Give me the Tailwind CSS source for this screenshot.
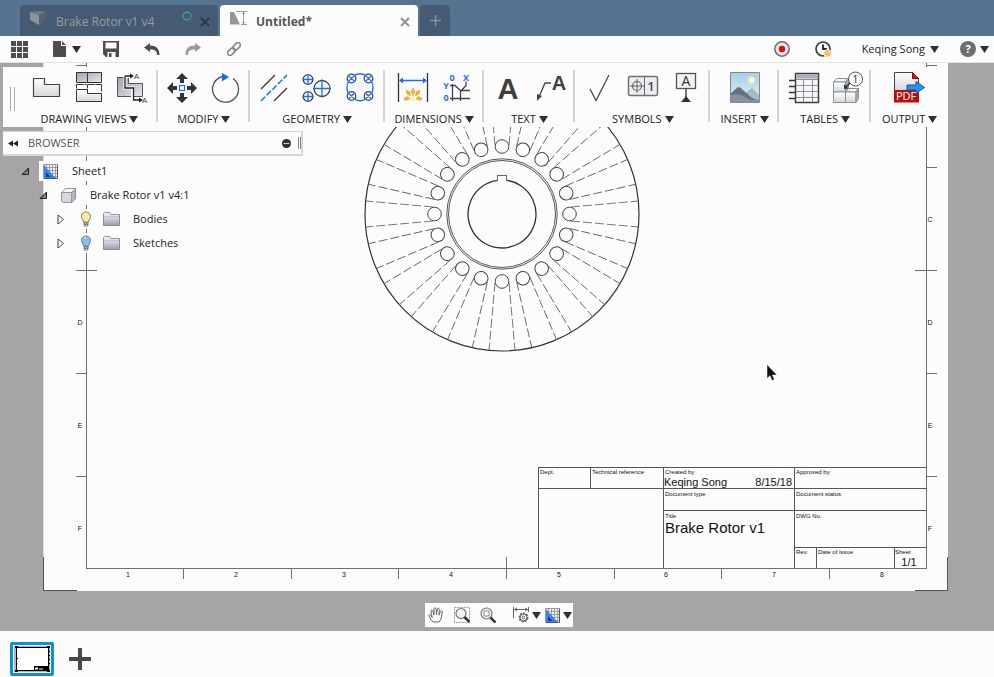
<!DOCTYPE html>
<html lang="en">
<head>
  <meta charset="UTF-8">
  <meta name="viewport" content="width=device-width, initial-scale=1.0">
  <title>Untitled* - Drawing</title>
  <script src="https://cdn.jsdelivr.net/npm/@tailwindcss/browser@4"></script>
</head>
<body class="h-screen flex flex-col overflow-hidden bg-[#fcfcfc] font-['Open_Sans',sans-serif] text-[11px] leading-4 text-[#222]">

  <!-- shared shapes -->
  <svg class="absolute w-0 h-0" aria-hidden="true">
    <defs>
      <linearGradient id="metal" x1="0" y1="0" x2="0" y2="1"><stop offset="0" stop-color="#fff"/><stop offset="1" stop-color="#d4d6da"/></linearGradient>
      <linearGradient id="steel" x1="0" y1="0" x2="1" y2="1"><stop offset="0" stop-color="#9da1ab"/><stop offset="1" stop-color="#e6e8ec"/></linearGradient>
      <linearGradient id="folder" x1="0" y1="0" x2="0" y2="1"><stop offset="0" stop-color="#f6f7f8"/><stop offset="1" stop-color="#9aa2b0"/></linearGradient>
      <linearGradient id="sky" x1="0" y1="0" x2="0" y2="1"><stop offset="0" stop-color="#a5cfe6"/><stop offset="1" stop-color="#e0f2f8"/></linearGradient>
    </defs>
    <symbol id="caret" viewBox="0 0 9 7"><path d="M0 0h9L4.500 7z" fill="#2f2f2f"/></symbol>
    <symbol id="bulb" viewBox="0 0 12 16">
      <path d="M6 1a4.500 4.500 0 0 1 4.500 4.500C10.500 8 8.500 9 8.300 11.200H3.700C3.500 9 1.500 8 1.500 5.500A4.500 4.500 0 0 1 6 1z" fill="currentColor" stroke="#77776f"/>
      <path d="M4 3.500q1-1.300 2-1.300" stroke="#fff" fill="none"/>
      <path d="M4 11.500h4v3L6 15.500l-2-1z" fill="#ddd" stroke="#666" stroke-width=".8"/><path d="M4 13.200h4" stroke="#555"/>
    </symbol>
    <symbol id="folder-icon" viewBox="0 0 17 14">
      <path d="M.5 13.500v-12l1-1h5l1.500 2h8.500v11z" fill="url(#folder)" stroke="#8a8e96"/><path d="M1 4.500h15" stroke="#c4c7cc"/>
    </symbol>
    <symbol id="sheet-icon" viewBox="0 0 15 15">
      <path d="M.5.500h14v14H.5z" fill="#f3f3f3" stroke="#999"/>
      <path d="M3.500 1v13M6.500 1v13M9.500 1v13M12.500 1v13M1 3.500h13M1 6.500h13M1 9.500h13M1 12.500h13" stroke="#8b8b8b" stroke-width=".8"/>
      <path d="M1 1l12 13.500H1z" fill="#3384f5"/><path d="M3 8l4.500 5H3z" fill="#163d80"/>
      <path d="M14.500 1v13.500H1" fill="none" stroke="#555"/>
    </symbol>
    <symbol id="expanded" viewBox="0 0 9 9"><path d="M7.500 1v6.500H1z" fill="#666" stroke="#222"/><path d="M6.500 4v2.500H4z" fill="#aaa"/></symbol>
    <symbol id="collapsed" viewBox="0 0 8 11"><path d="M1 1l5.500 4.500L1 10z" fill="#fff" stroke="#444"/></symbol>
  </svg>

  <!-- document tabs -->
  <header class="h-9 shrink-0 bg-[#56738f] pl-5 flex items-end gap-[2px]">
    <div class="w-[198px] h-[31px] rounded-t bg-[#455b73] text-[#9b9b9b] flex items-center pl-[9px] pr-1 pt-0.5">
      <svg class="w-[18px] h-4 mr-[9px] mb-2" viewBox="0 0 18 16"><path d="M1 2l10-1 6 1-7 3z" fill="#707a83"/><path d="M1 2l9 3v10l-9-5z" fill="#8b9399"/><path d="M10 5l7-3v8l-7 5z" fill="#566470"/></svg>
      <button class="text-[12px] whitespace-nowrap">Brake Rotor v1 v4</button>
      <svg class="w-[10px] h-[10px] ml-auto mb-3" viewBox="0 0 10 10"><circle cx="5" cy="5" r="4" fill="none" stroke="#3fa08d" stroke-width="1.300"/></svg>
      <button aria-label="Close Brake Rotor" class="ml-1 p-1"><svg class="w-[10px] h-[10px]" viewBox="0 0 10 10"><path d="M.8.800l8.400 8.400M9.200.800L.8 9.200" stroke="#2e3741" stroke-width="1.800"/></svg></button>
    </div>
    <div class="w-[198px] h-[31px] rounded-t bg-[#fcfcfc] text-[#555] flex items-center pl-[9px] pr-1 pt-0.5">
      <svg class="w-[18px] h-4 mr-[9px] mb-2" viewBox="0 0 18 16"><path d="M1 14.500V2h4l6 12.500z" fill="#959595"/><path d="M7 1.500h11M14.500 1v14M12 14.500h6" fill="none" stroke="#858585" stroke-width=".8"/><path d="M14.500 2l-1.500 2h3zM14.500 14l-1.500-2h3z" fill="#858585"/></svg>
      <button class="text-[12px] font-bold">Untitled*</button>
      <button aria-label="Close Untitled" class="ml-auto p-1"><svg class="w-[10px] h-[10px]" viewBox="0 0 10 10"><path d="M1 1l8 8M9 1L1 9" stroke="#929292" stroke-width="2"/></svg></button>
    </div>
    <button aria-label="New tab" class="w-[30px] h-[31px] rounded-t bg-[#455b73] flex items-center justify-center"><svg class="w-[11px] h-[11px]" viewBox="0 0 11 11"><path d="M5.500 0v11M0 5.500h11" stroke="#8b9093" stroke-width="1.500"/></svg></button>
  </header>

  <!-- quick access bar -->
  <nav class="h-[27px] shrink-0 border-b border-[#e2e2e2] bg-[#fcfcfc] flex items-center pl-[11px] pr-[5px]">
    <button aria-label="Data panel" class="mr-6"><svg class="w-[18px] h-[17px]" viewBox="0 0 18 17" fill="#4d4d4d"><path d="M0 0h5v5H0zM6 0h5v5H6zM12 0h5v5h-5zM0 6h5v5H0zM6 6h5v5H6zM12 6h5v5h-5zM0 12h5v5H0zM6 12h5v5H6zM12 12h5v5h-5z"/></svg></button>
    <button aria-label="File" class="flex items-center gap-[6px]"><svg class="w-[13px] h-4" viewBox="0 0 13 16" fill="#4d4d4d"><path d="M0 0h8v5h5v11H0zM9 0l4 4H9z"/></svg><svg class="w-[9px] h-[7px]"><use href="#caret"/></svg></button>
    <button aria-label="Save" class="ml-[22px]"><svg class="w-4 h-4" viewBox="0 0 16 16"><path d="M0 0h16v16H3l-3-3z" fill="#4d4d4d"/><path d="M2.500 1.500h11v6h-11zM4.500 11h8v5h-8z" fill="#fcfcfc"/><path d="M6 12h2.500v4H6z" fill="#4d4d4d"/></svg></button>
    <button aria-label="Undo" class="ml-[25px]"><svg class="w-4 h-3" viewBox="0 0 16 12"><path d="M0 4.500L6 0v2.500c6 0 9.500 3 9.500 9.500h-2.500c0-4-2-5.500-7-5.500V9z" fill="#4d4d4d"/></svg></button>
    <button aria-label="Redo" class="ml-[25px]"><svg class="w-4 h-3" viewBox="0 0 16 12"><path d="M16 4.500L10 0v2.500C4 2.500.5 5.500.500 12H3c0-4 2-5.500 7-5.500V9z" fill="#9a9a9a"/></svg></button>
    <button aria-label="Link" class="ml-[26px]"><svg class="w-[14px] h-[14px]" viewBox="0 0 14 14" fill="none" stroke="#8a8a8a" stroke-width="1.600"><g transform="rotate(-45 7 7)"><rect x="-1" y="4.500" width="8.500" height="5" rx="2.500"/><rect x="6.500" y="4.500" width="8.500" height="5" rx="2.500"/></g></svg></button>
    <button aria-label="Record" class="ml-auto"><svg class="w-4 h-4" viewBox="0 0 16 16"><circle cx="8" cy="8" r="7.200" fill="#e6e6e6" stroke="#6a6a6a" stroke-width="1.500"/><circle cx="8" cy="8" r="3.200" fill="#e20f06"/></svg></button>
    <button aria-label="Job status" class="ml-[25px]"><svg class="w-4 h-4" viewBox="0 0 16 16"><circle cx="8" cy="8" r="7" fill="none" stroke="#3e3e3e" stroke-width="1.700"/><path d="M8 3.500V8h4" fill="none" stroke="#222" stroke-width="1.800"/><circle cx="12.500" cy="12.300" r="4" fill="#fcfcfc"/><circle cx="12.500" cy="12.300" r="3.200" fill="#ffbd5c"/></svg></button>
    <button class="ml-[31px] flex items-center gap-[5px] whitespace-nowrap">Keqing Song <svg class="w-[9px] h-[7px]"><use href="#caret"/></svg></button>
    <button aria-label="Help" class="ml-[21px] flex items-center gap-1"><svg class="w-4 h-4" viewBox="0 0 16 16"><circle cx="8" cy="8" r="8" fill="#6e6e6e"/><text x="8" y="12" text-anchor="middle" font-size="11" font-weight="bold" fill="#fff">?</text></svg><svg class="w-[9px] h-[7px]"><use href="#caret"/></svg></button>
  </nav>

  <main class="relative flex-1 min-h-0 overflow-hidden bg-[#a5a5a5]">

    <!-- drawing sheet -->
    <div class="ml-[43px] mr-[46px]">
      <svg class="block w-full h-auto bg-[#fcfcfc]" viewBox="43 63 905 528" role="img" aria-label="Brake rotor drawing sheet" font-family="Liberation Sans, sans-serif" fill="#111">
        <g fill="none" stroke="#6f6f6f" shape-rendering="crispEdges">
          <path d="M43.500 63v494" stroke="#dcdcdc"/>
          <path d="M43.500 557v33.500H77M947.500 557v33.500H915" stroke="#555"/>
          <path d="M86.500 63v505.500h840V63"/>
          <path d="M76 65.500h10M76 270.500h21M76 373.500h10M76 476.500h10M927 65.500h10M927 167.500h10M915 270.500h22M927 373.500h10M927 476.500h10"/>
          <path d="M183.500 568v11M291.500 568v11M398.500 568v11M506.500 557v22M614.500 568v11M721.500 568v11M829.500 568v11"/>
          <path d="M538.500 568v-100.500h388M538.500 488.500h388M663.500 510.500h263M794.500 547.500h132M590.500 467v21M663.500 467v101M794.500 467v101M816.500 547v21M894.500 547v21" stroke="#555"/>
        </g>
        <g font-size="7" text-anchor="middle">
          <text x="80" y="325">D</text><text x="80" y="428">E</text><text x="80" y="531">F</text>
          <text x="930" y="222">C</text><text x="930" y="325">D</text><text x="930" y="428">E</text><text x="930" y="531">F</text>
          <text x="128" y="577">1</text><text x="236" y="577">2</text><text x="344" y="577">3</text><text x="451" y="577">4</text>
          <text x="559" y="577">5</text><text x="666" y="577">6</text><text x="774" y="577">7</text><text x="882" y="577">8</text>
        </g>
        <g font-size="6">
          <text x="540" y="474">Dept.</text><text x="592" y="474">Technical reference</text><text x="665" y="474">Created by</text><text x="796" y="474">Approved by</text>
          <text x="665" y="496">Document type</text><text x="796" y="496">Document status</text>
          <text x="665" y="518">Title</text><text x="796" y="518">DWG No.</text>
          <text x="796" y="554">Rev.</text><text x="818" y="554">Date of issue</text><text x="895" y="554">Sheet</text>
        </g>
        <g font-size="11">
          <text x="664" y="486">Keqing Song</text><text x="792" y="486" text-anchor="end">8/15/18</text><text x="909" y="566" text-anchor="middle">1/1</text>
        </g>
        <text x="665" y="533" font-size="15">Brake Rotor v1</text>
        <g transform="translate(502 214)" fill="none" stroke="#444">
          <circle r="137" stroke="#333" stroke-width="1.200"/>
          <circle r="55.200" stroke-width=".9"/><circle r="53.500" stroke-width=".9"/>
          <path d="M4.500-33.700A34 34 0 1 1-4.500-33.700" stroke="#333" stroke-width="1.300"/>
          <path d="M-4.500-33.500v-5h9v5" shape-rendering="crispEdges" stroke="#666"/>
          <g id="vanes"></g>
        </g>
      </svg>
    </div>

    <!-- ribbon -->
    <div class="absolute left-[3px] right-[46px] top-1 h-[60px] bg-[#fcfcfc] flex items-stretch">
      <div class="w-[18px] shrink-0 flex items-center justify-center gap-[3px] pt-1"><i class="w-px h-6 bg-[#aaa]"></i><i class="w-px h-6 bg-[#aaa]"></i></div>

      <section class="w-[137px] mt-[3px] mb-[5px] pl-0.5 border-r-2 border-[#d4d4d4] flex flex-col items-center justify-between">
        <div class="flex">
          <button aria-label="Base view" class="w-[43px] flex justify-center"><svg class="w-9 h-9" viewBox="0 0 36 36"><path d="M5.500 8.500h11v6h15v12h-26z" fill="url(#metal)" stroke="#444" stroke-width="1.200"/></svg></button>
          <button aria-label="Projected view" class="w-[43px] flex justify-center"><svg class="w-9 h-9" viewBox="0 0 36 36" stroke="#333"><path d="M5.500 2.500h25v10h-25z" fill="url(#steel)"/><path d="M16.500 2.500v10"/><path d="M5.500 14.500v4M5.500 14.500h10M16.500 14.500h14M30.500 14.500v7M16.500 14.500v4" fill="none" stroke-dasharray="7 1"/><path d="M5.500 19.500h11v4h14v8h-25z" fill="url(#metal)"/></svg></button>
          <button aria-label="Section view" class="w-[43px] flex justify-center"><svg class="w-9 h-9" viewBox="0 0 36 36"><path d="M3.500 7.500h11v6h14v13h-25z" fill="url(#steel)" stroke="#555"/><path d="M11 6.500v11.500h7.500v12h6M11 6.500h5" fill="none" stroke="#fff" stroke-width="3"/><path d="M11 6h6M11 6v12h8.500v12h6" fill="none" stroke="#222" stroke-width="1.300"/><path d="M16 3.500l4 2.500-4 2.500zM25 27.500l4 2.500-4 2.500z" fill="#222"/><g font-size="8" fill="#333"><text x="20" y="9">A</text><text x="28" y="33">A</text></g></svg></button>
        </div>
        <button class="-mb-[5px] flex items-center gap-[3px] whitespace-nowrap">DRAWING VIEWS <svg class="w-[9px] h-[7px]"><use href="#caret"/></svg></button>
      </section>

      <section class="w-[92px] mt-[3px] mb-[5px] pl-0.5 border-r-2 border-[#d4d4d4] flex flex-col items-center justify-between">
        <div class="flex">
          <button aria-label="Move" class="w-[43px] flex justify-center"><svg class="w-9 h-9" viewBox="0 0 36 36"><path d="M18 3l6 6h-4v4h-4V9h-4zM18 33l6-6h-4v-4h-4v4h-4zM3 18l6-6v4h4v4H9v4zM33 18l-6-6v4h-4v4h4v4z" fill="#333"/><path d="M15.500 15.500h5v5h-5z" fill="#fff" stroke="#0a6cff" stroke-width="1.200"/></svg></button>
          <button aria-label="Rotate" class="w-[43px] flex justify-center"><svg class="w-9 h-9" viewBox="0 0 36 36"><path d="M26 8.500A13 13 0 1 1 15.500 6.500" fill="none" stroke="#555" stroke-width="1.300"/><path d="M15 3l7 4-7 4.500z" fill="#0a6cff"/></svg></button>
        </div>
        <button class="-mb-[5px] flex items-center gap-[3px]">MODIFY <svg class="w-[9px] h-[7px]"><use href="#caret"/></svg></button>
      </section>

      <section class="w-[135px] mt-[3px] mb-[5px] pl-0.5 border-r-2 border-[#d4d4d4] flex flex-col items-center justify-between">
        <div class="flex">
          <button aria-label="Centerline" class="w-[43px] flex justify-center"><svg class="w-9 h-9" viewBox="0 0 36 36" stroke="#444" stroke-width="1.500"><path d="M5 19L19 5M18 31l13-13"/><path d="M5 31L31 5" stroke="#1a6eff" stroke-dasharray="6 2"/></svg></button>
          <button aria-label="Center mark" class="w-[43px] flex justify-center"><svg class="w-9 h-9" viewBox="0 0 36 36" fill="none"><g stroke="#3b4048" stroke-width="1.300"><circle cx="9" cy="9.500" r="4.800"/><circle cx="9" cy="26.500" r="4.800"/><circle cx="23" cy="18.500" r="8"/></g><path d="M9 4v11M3.500 9.500h11M9 21v11M3.500 26.500h11M23 9.500v18M14 18.500h18" stroke="#1a6eff" stroke-width="1.300"/></svg></button>
          <button aria-label="Center mark pattern" class="w-[43px] flex justify-center"><svg class="w-9 h-9" viewBox="0 0 36 36" fill="none"><g stroke="#3b4048" stroke-width="1.200"><circle cx="9.500" cy="8.500" r="4.300"/><circle cx="26.500" cy="8.500" r="4.300"/><circle cx="9.500" cy="26" r="4.300"/><circle cx="26.500" cy="26" r="4.300"/></g><path d="M12 5.500q6-3.500 12 0M12 29q6 3.500 12 0M6.500 11.500q-3 6 0 12M29.500 11.500q3 6 0 12M6.500 5.500l6 6M12.500 5.500l-6 6M23.500 5.500l6 6M29.500 5.500l-6 6M6.500 23l6 6M12.500 23l-6 6M23.500 23l6 6M29.500 23l-6 6" stroke="#1a6eff" stroke-width="1.300"/></svg></button>
        </div>
        <button class="-mb-[5px] flex items-center gap-[3px]">GEOMETRY <svg class="w-[9px] h-[7px]"><use href="#caret"/></svg></button>
      </section>

      <section class="w-[99px] mt-[3px] mb-[5px] pl-0.5 border-r-2 border-[#d4d4d4] flex flex-col items-center justify-between">
        <div class="flex">
          <button aria-label="Dimension" class="w-[43px] flex justify-center"><svg class="w-9 h-9" viewBox="0 0 36 36"><path d="M3.500 3v29M32.500 3v29" stroke="#333" stroke-width="1.300"/><path d="M5 10.500h26" stroke="#1a6eff" stroke-width="1.500"/><path d="M4 10.500l4-3v6zM32 10.500l-4-3v6z" fill="#1a6eff"/><g fill="#f5b51d" stroke="#c98d1a" stroke-width=".4"><path d="M18 18l2 3.500-2 4-2-4z"/><path d="M11 20l4 2 .5 4-3.500-2z"/><path d="M25 20l-4 2-.5 4 3.500-2z"/><path d="M9 28l4-1.500 2 2.500-5 1.500z"/><path d="M27 28l-4-1.500-2 2.500 5 1.500z"/></g><circle cx="18" cy="28.500" r="2.500" fill="#fff0b5"/></svg></button>
          <button aria-label="Ordinate dimension" class="w-[43px] flex justify-center"><svg class="w-9 h-9" viewBox="0 0 36 36"><path d="M12 15.500h5l6 5.500 5-5.500v-4M14.500 14v17M22.500 21v10M22 20.500h10M12 28.500h20" fill="none" stroke="#444" stroke-width="1.300"/><g font-size="9" font-weight="bold" fill="#1a6eff" text-anchor="middle"><text x="14" y="11">0</text><text x="28" y="11">X</text><text x="8" y="19">Y</text><text x="8" y="31">0</text></g></svg></button>
        </div>
        <button class="-mb-[5px] flex items-center gap-[3px]">DIMENSIONS <svg class="w-[9px] h-[7px]"><use href="#caret"/></svg></button>
      </section>

      <section class="w-[92px] mt-[3px] mb-[5px] pl-0.5 border-r-2 border-[#d4d4d4] flex flex-col items-center justify-between">
        <div class="flex">
          <button aria-label="Text" class="w-[43px] flex justify-center"><svg class="w-9 h-9" viewBox="0 0 36 36"><text x="18" y="29" text-anchor="middle" font-size="29" font-weight="bold" font-family="Liberation Sans" fill="#3f3f3f">A</text></svg></button>
          <button aria-label="Leader" class="w-[43px] flex justify-center"><svg class="w-9 h-9" viewBox="0 0 36 36"><path d="M6 27l6-14h6" fill="none" stroke="#444" stroke-width="1.300"/><path d="M4 31V24l5 2z" fill="#444"/><text x="26" y="20" text-anchor="middle" font-size="20" font-weight="bold" font-family="Liberation Sans" fill="#3f4148">A</text></svg></button>
        </div>
        <button class="-mb-[5px] flex items-center gap-[3px]">TEXT <svg class="w-[9px] h-[7px]"><use href="#caret"/></svg></button>
      </section>

      <section class="w-[135px] mt-[3px] mb-[5px] pl-0.5 border-r-2 border-[#d4d4d4] flex flex-col items-center justify-between">
        <div class="flex">
          <button aria-label="Surface texture" class="w-[43px] flex justify-center"><svg class="w-9 h-9" viewBox="0 0 36 36"><path d="M8 19l6 11.500L27 5" fill="none" stroke="#4a4a4a" stroke-width="1.300"/></svg></button>
          <button aria-label="Feature control frame" class="w-[43px] flex justify-center"><svg class="w-9 h-9" viewBox="0 0 36 36"><rect x="3.500" y="6.500" width="29" height="19" rx="2" fill="#eceef0" stroke="#707070" stroke-width="1.500"/><path d="M19.500 7v18M12 9v14M5 16h14" stroke="#606468"/><circle cx="12" cy="16" r="4.500" fill="none" stroke="#606468" stroke-width="1.200"/><text x="26" y="21" text-anchor="middle" font-size="13" font-weight="600" fill="#4c4c4c">1</text></svg></button>
          <button aria-label="Datum identifier" class="w-[43px] flex justify-center"><svg class="w-9 h-9" viewBox="0 0 36 36"><rect x="8.500" y="3.500" width="19" height="15" fill="#f1f2f4" stroke="#555" stroke-width="1.300"/><path d="M18 19v8" stroke="#444" stroke-width="1.500"/><path d="M18 26l5 6H13z" fill="#333"/><text x="18" y="16" text-anchor="middle" font-size="14" fill="#333">A</text></svg></button>
        </div>
        <button class="-mb-[5px] flex items-center gap-[3px]">SYMBOLS <svg class="w-[9px] h-[7px]"><use href="#caret"/></svg></button>
      </section>

      <section class="w-[69px] mt-[3px] mb-[5px] pl-0.5 border-r-2 border-[#d4d4d4] flex flex-col items-center justify-between">
        <button aria-label="Insert image" class="w-[43px] flex justify-center"><svg class="w-9 h-9" viewBox="0 0 36 36"><path d="M3.500 2.500h29v30h-29z" fill="url(#sky)" stroke="#83888e"/><circle cx="24.500" cy="10" r="3.300" fill="#fffbdc" stroke="#f3e7a0"/><path d="M17 24l8-6 7 7v7H15z" fill="#a9b6c4"/><path d="M4 23l7-6q3 0 5 3l9 8 7 3v1H4z" fill="#66727f"/><path d="M4 25q9-2 14 2t14 3v2H4z" fill="#8593a2"/></svg></button>
        <button class="-mb-[5px] flex items-center gap-[3px]">INSERT <svg class="w-[9px] h-[7px]"><use href="#caret"/></svg></button>
      </section>

      <section class="w-[92px] mt-[3px] mb-[5px] pl-0.5 border-r-2 border-[#d4d4d4] flex flex-col items-center justify-between">
        <div class="flex">
          <button aria-label="Parts list" class="w-[43px] flex justify-center"><svg class="w-9 h-9" viewBox="0 0 36 36"><path d="M9.500 3.500h23v29h-23z" fill="#f5f6f8" stroke="#3c3f45" stroke-width="1.500"/><path d="M10 4h22v4.500H10z" fill="#a9adb7"/><path d="M3 10.500h6M3 16.500h6M3 22.500h6M3 28.500h6" stroke="#333" stroke-width="1.500"/><path d="M10 9.500h22M10 15.500h22M10 21.500h22M10 27.500h22M17.500 9v23M26.500 9v23" stroke="#8a8e96"/></svg></button>
          <button aria-label="Balloon" class="w-[43px] flex justify-center"><svg class="w-9 h-9" viewBox="0 0 36 36" stroke="#8c9096"><path d="M4.500 12l3-3.500h11l-2 3.500z" fill="#f2f3f4"/><path d="M4.500 12h12v10h-12z" fill="url(#metal)"/><path d="M16.500 12l3-3v10l-3 3z" fill="#a9adb3"/><path d="M16.500 22l3-3.500h10l-2.500 3.500z" fill="#f2f3f4"/><path d="M4.500 22h12v10.500h-12zM16.500 22H27v10.500H16.500z" fill="url(#metal)"/><path d="M27 22l2.500-3.500v10l-2.500 4z" fill="#a9adb3"/><path d="M21 13l-4 4" stroke="#333" stroke-width="1.500"/><path d="M15 19v-5l4.500 4.500z" fill="#333" stroke="none"/><circle cx="26.500" cy="9" r="7" fill="#fff" stroke="#555"/><text x="26.500" y="13" text-anchor="middle" font-size="11" fill="#333" stroke="none">1</text></svg></button>
        </div>
        <button class="-mb-[5px] flex items-center gap-[3px]">TABLES <svg class="w-[9px] h-[7px]"><use href="#caret"/></svg></button>
      </section>

      <section class="w-[77px] mt-[3px] mb-[5px] flex flex-col items-center justify-between">
        <button aria-label="Output PDF" class="w-[43px] flex justify-center"><svg class="w-9 h-9" viewBox="0 0 36 36"><path d="M2.500 2.500h18l6 6v12h-24z" fill="url(#metal)" stroke="#444"/><path d="M20.500 2.500v6h6z" fill="#d21515" stroke="#8d0d0d"/><path d="M2 20h25v12.500H2z" fill="#bd0d0a"/><path d="M15 15h9v-3.500l8.500 6-8.500 6V20h-9z" fill="#2491f5" stroke="#1057a8"/><text x="4" y="30" font-size="11" fill="#fff">PDF</text></svg></button>
        <button class="-mb-[5px] flex items-center gap-[3px]">OUTPUT <svg class="w-[9px] h-[7px]"><use href="#caret"/></svg></button>
      </section>
    </div>

    <!-- browser panel and tree -->
    <aside class="absolute left-[3px] top-[68px] w-[300px]">
      <div class="h-[25px] bg-[#fcfcfc] border-r-2 border-b-2 border-t border-[#d6d6d6] flex items-center pl-1">
        <button aria-label="Collapse browser" class="mr-[9px]"><svg class="w-3 h-[7px]" viewBox="0 0 12 7" fill="#222"><path d="M6 .5v6L1 3.500zM11 .5v6L6 3.500z"/></svg></button>
        <h2 class="text-[#555]">BROWSER</h2>
        <button aria-label="Panel options" class="ml-auto mr-[7px]"><svg class="w-[9px] h-[9px]" viewBox="0 0 9 9"><circle cx="4.500" cy="4.500" r="4.500" fill="#2b2b2b"/><path d="M1.500 4.500h6" stroke="#ccc" stroke-width="1.200"/></svg></button>
        <i class="w-px h-3 bg-[#888] mr-px"></i><i class="w-px h-3 bg-[#888]"></i>
      </div>
      <ul class="pt-[3px] flex flex-col">
        <li class="h-6 flex items-center pl-[18px]">
          <button aria-label="Collapse Sheet1"><svg class="w-[9px] h-[9px]"><use href="#expanded"/></svg></button>
          <span class="ml-[9px] w-[72px] h-5 bg-[#fcfcfc] flex items-center gap-[14px] pl-1"><svg class="w-[15px] h-[15px] shrink-0"><use href="#sheet-icon"/></svg>Sheet1</span>
        </li>
        <li class="h-6 flex items-center pl-9">
          <button aria-label="Collapse Brake Rotor"><svg class="w-[9px] h-[9px]"><use href="#expanded"/></svg></button>
          <span class="ml-[9px] h-5 bg-[#fcfcfc] flex items-center gap-[14px] pl-1 whitespace-nowrap"><svg class="w-[15px] h-[15px] shrink-0" viewBox="0 0 15 15" stroke="#93969c"><path d="M.5 4.500l4-4h10l-4 4z" fill="#f7f7f7"/><path d="M.5 4.500h10v10H2l-1.500-1.500z" fill="#d5d8dd"/><path d="M10.500 4.500l4-4V11l-4 3.500z" fill="#b3b6bc"/></svg>Brake Rotor v1 v4:1</span>
        </li>
        <li class="h-6 flex items-center pl-[54px]">
          <button aria-label="Expand Bodies"><svg class="w-2 h-[11px]"><use href="#collapsed"/></svg></button>
          <span class="ml-[11px] h-5 bg-[#fcfcfc] flex items-center pl-1"><svg class="w-3 h-4 text-[#fbeaa0]"><use href="#bulb"/></svg><svg class="w-[17px] h-[14px] ml-[11px] mr-[13px]"><use href="#folder-icon"/></svg>Bodies</span>
        </li>
        <li class="h-6 flex items-center pl-[54px]">
          <button aria-label="Expand Sketches"><svg class="w-2 h-[11px]"><use href="#collapsed"/></svg></button>
          <span class="ml-[11px] h-5 bg-[#fcfcfc] flex items-center pl-1"><svg class="w-3 h-4 text-[#8cbcf5]"><use href="#bulb"/></svg><svg class="w-[17px] h-[14px] ml-[11px] mr-[13px]"><use href="#folder-icon"/></svg>Sketches</span>
        </li>
      </ul>
    </aside>

    <!-- navigation bar -->
    <div class="absolute bottom-1 left-[425px] h-6 bg-[#fcfcfc] flex items-center pl-[3px] pr-px">
      <button aria-label="Pan" class="mr-[10px]"><svg class="w-4 h-4" viewBox="0 0 16 16"><path d="M5 15C3 13 2 10.500.700 8.500c0-1.300 1.500-1.300 2.500.5l1 1.500L3 4c0-1.300 1.500-1.300 2 0l1 4V1.800c0-1.300 2-1.300 2 0L8.500 7.500 9.300 2c.2-1.200 2-1.200 1.900.2L11 8.200l1.700-4c.6-1.200 2-.6 1.700.6L13 12l-2 3z" fill="#fff" stroke="#666"/></svg></button>
      <button aria-label="Zoom window" class="mr-[9px]"><svg class="w-[17px] h-4" viewBox="0 0 17 16"><path d="M.5.500h15v15H.5z" fill="none" stroke="#999" stroke-dasharray="2 1"/><circle cx="7" cy="6.500" r="5" fill="#f0f2f4" stroke="#777" stroke-width="1.200"/><path d="M10.500 10l5 5" stroke="#333" stroke-width="2.500"/></svg></button>
      <button aria-label="Fit" class="mr-[17px]"><svg class="w-4 h-4" viewBox="0 0 16 16"><circle cx="6.500" cy="6.500" r="5.500" fill="#f0f2f4" stroke="#777" stroke-width="1.200"/><path d="M4 4h5v5H4z" fill="#fff" stroke="#888"/><path d="M10.500 10.500l5 5" stroke="#333" stroke-width="2.500"/></svg></button>
      <button aria-label="Display settings" class="flex items-center gap-[2px] mr-1"><svg class="w-[17px] h-4" viewBox="0 0 17 16" fill="none" stroke="#666"><path d="M.5 0v11M15.500 0v5M1 2.500h14M4 1L1.500 2.500 4 4M12 1l2.500 1.500L12 4"/><circle cx="10.500" cy="10.500" r="4" stroke-width="2" stroke-dasharray="2 1"/><circle cx="10.500" cy="10.500" r="3.500"/><circle cx="10.500" cy="10.500" r="1.300"/></svg><svg class="w-[9px] h-[7px]"><use href="#caret"/></svg></button>
      <button aria-label="Sheet settings" class="flex items-center gap-[3px]"><svg class="w-[15px] h-[15px]"><use href="#sheet-icon"/></svg><svg class="w-[9px] h-[7px]"><use href="#caret"/></svg></button>
    </div>

    <!-- pointer -->
    <svg class="absolute left-[766px] top-[301px] w-3 h-[18px]" viewBox="0 0 12 18"><path d="M1 .5v14l3-2.800 2 4.800 2.500-1-2-4.500h4.500z" fill="#111" stroke="#fff" stroke-width=".5"/></svg>
  </main>

  <!-- sheet strip -->
  <footer class="h-[46px] shrink-0 bg-[#fcfcfc] flex items-center pl-[10px] pt-[10px] gap-[15px]">
    <button aria-label="Sheet 1" class="w-11 h-[34px] border-[3px] border-[#0696d7] rounded-[2px] bg-white flex items-center justify-center">
      <svg class="w-9 h-[26px]" viewBox="0 0 36 26"><path d="M0 0h36v26H0z" fill="#b5b5b5"/><path d="M2.500 1.500h32v23h-32z" fill="#fff" stroke="#000"/><path d="M1 0h3v2H1zM33 0h3v2h-3zM1 24h3v2H1zM33 24h3v2h-3zM2 12h2v1H2zM34 5h2v1h-2zM34 9h2v1h-2zM34 13h2v1h-2zM34 17h2v1h-2zM20 20h14v4H20z"/><path d="M21 21.500h3v2h-3zM25 22.500h4v1h-4z" fill="#fff"/></svg>
    </button>
    <button aria-label="Add sheet"><svg class="w-[22px] h-[22px]" viewBox="0 0 22 22"><path d="M11 0v22M0 11h22" stroke="#484a50" stroke-width="4"/></svg></button>
  </footer>

  <script>
    const vanes = document.getElementById('vanes');
    const holes = 20;
    let shapes = '';

    // one hole and its two hidden vane edges every 18 degrees
    for (let i = 0; i < holes; i++) {
      shapes += `<g transform="rotate(${i * 360 / holes})">
        <circle cy="67.5" r="6.8"/>
        <path d="M-7 69L-13 136M7 69L13 136" stroke="#666" stroke-width=".9" stroke-dasharray="9 3"/>
      </g>`;
    }
    vanes.innerHTML = shapes;
  </script>
</body>
</html>
